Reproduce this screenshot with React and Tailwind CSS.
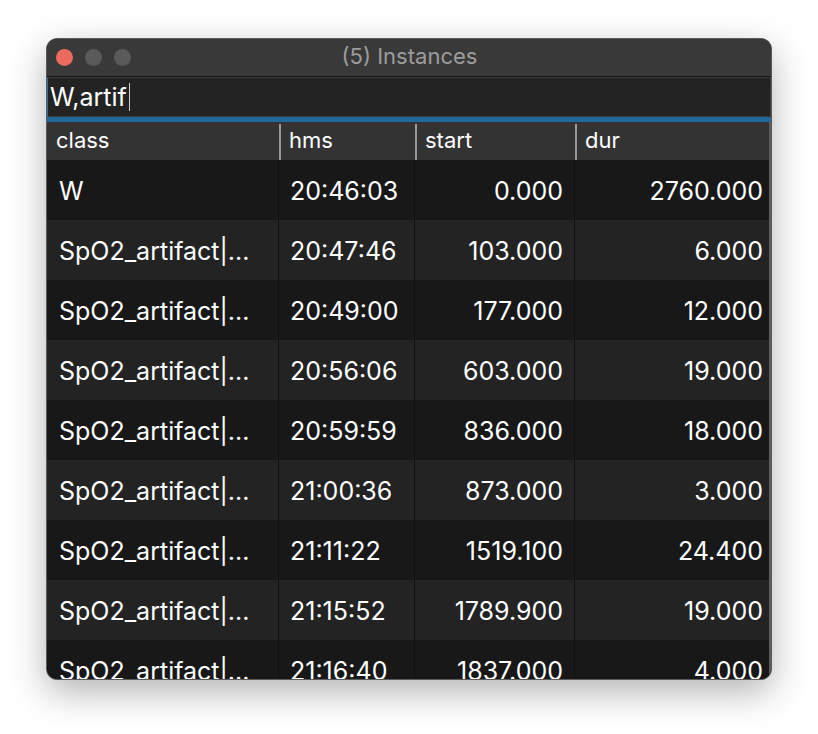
import React from "react";

const rows = [
  { cls: "W", hms: "20:46:03", start: "0.000", dur: "2760.000" },
  { cls: "SpO2_artifact|...", hms: "20:47:46", start: "103.000", dur: "6.000" },
  { cls: "SpO2_artifact|...", hms: "20:49:00", start: "177.000", dur: "12.000" },
  { cls: "SpO2_artifact|...", hms: "20:56:06", start: "603.000", dur: "19.000" },
  { cls: "SpO2_artifact|...", hms: "20:59:59", start: "836.000", dur: "18.000" },
  { cls: "SpO2_artifact|...", hms: "21:00:36", start: "873.000", dur: "3.000" },
  { cls: "SpO2_artifact|...", hms: "21:11:22", start: "1519.100", dur: "24.400" },
  { cls: "SpO2_artifact|...", hms: "21:15:52", start: "1789.900", dur: "19.000" },
  { cls: "SpO2_artifact|...", hms: "21:16:40", start: "1837.000", dur: "4.000" },
];

const cols = "grid grid-cols-[232px_136px_160px_1fr]";

const App = () => {
  return (
    <div className="min-h-screen bg-white pt-[38px] pl-[46px] font-['Inter','Liberation_Sans',sans-serif]">
      <div className="w-[726px] h-[642px] rounded-[11px] overflow-hidden border border-[#5a5a5a] bg-[#181818] shadow-[0_12px_36px_rgba(0,0,0,0.3)] flex flex-col">
        {/* Title bar */}
        <div className="h-[38px] shrink-0 bg-[#393939] border-b border-[#111] flex items-center relative">
          <div className="absolute left-[9px] top-[10px] flex gap-[12px]">
            <span className="w-[17px] h-[17px] rounded-full bg-[#ec6a5e]" />
            <span className="w-[17px] h-[17px] rounded-full bg-[#5a5a5a]" />
            <span className="w-[17px] h-[17px] rounded-full bg-[#5a5a5a]" />
          </div>
          <div className="flex-1 text-center text-[22px] leading-none text-[#9c9c9c] pl-[1px] pb-[4px]">(5) Instances</div>
        </div>

        {/* Search */}
        <div className="h-[40px] shrink-0 bg-[#232323] border border-[#3c3c3c] border-l-[#2c6e9c] flex items-center pl-[2px]">
          <span className="text-[25px] text-white leading-none">W,artif</span>
          <span className="w-[1.5px] h-[28px] bg-[#d0d0d0] ml-[2px]" />
        </div>
        <div className="h-[5px] shrink-0 bg-[#1f6a9a]" />

        {/* Header */}
        <div className={`${cols} h-[38px] shrink-0 bg-[#333333] border-r-2 border-[#5c5c5c] text-[22px] text-white`}>
          <div className="flex items-center pl-[9px] pb-[4px]">class</div>
          <div className="flex items-center pl-[8px] pb-[4px] border-l-2 border-[#9a9a9a] my-[2px]">hms</div>
          <div className="flex items-center pl-[8px] pb-[4px] border-l-2 border-[#9a9a9a] my-[2px]">start</div>
          <div className="flex items-center pl-[8px] pb-[4px] border-l-2 border-[#9a9a9a] my-[2px]">dur</div>
        </div>

        {/* Rows */}
        <div className="flex-1 overflow-hidden border-r-2 border-[#5c5c5c]">
          {rows.map((r, i) => (
            <div
              key={i}
              className={`${cols} h-[60px] text-[25px] text-white ${i % 2 === 0 ? "bg-[#181818]" : "bg-[#232323]"}`}
            >
              <div className="flex items-center pl-[12px] pt-[3px] border-r border-[#0f0f0f] whitespace-nowrap">{r.cls}</div>
              <div className="flex items-center pl-[11px] pt-[3px] border-r border-[#0f0f0f]">{r.hms}</div>
              <div className="flex items-center justify-end pr-[11px] pt-[3px] border-r border-[#0f0f0f]">{r.start}</div>
              <div className="flex items-center justify-end pr-[6px] pt-[3px]">{r.dur}</div>
            </div>
          ))}
        </div>
      </div>
    </div>
  );
};

export default App;
